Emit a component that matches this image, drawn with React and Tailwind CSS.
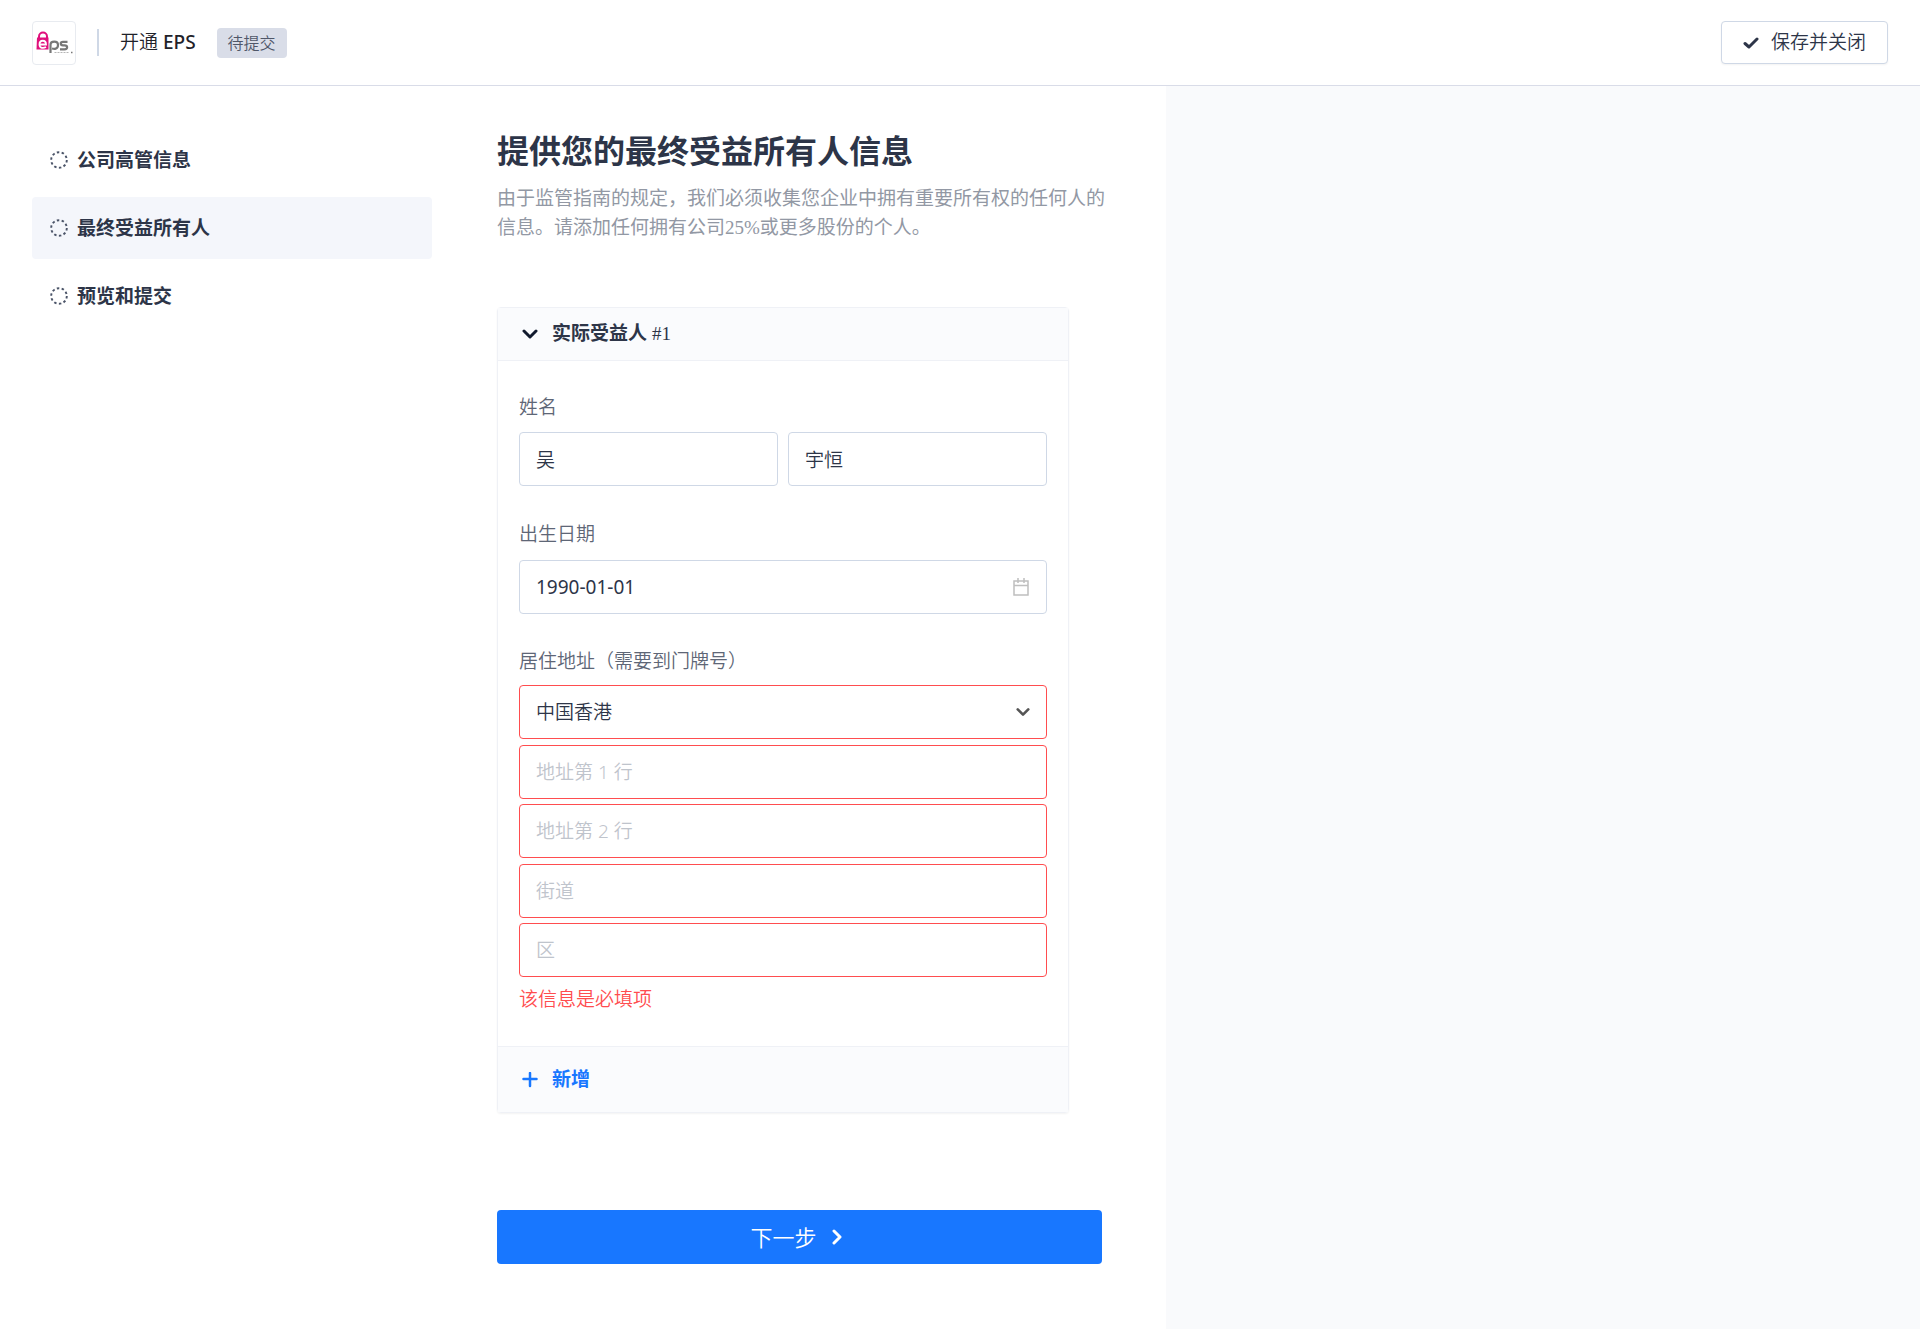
import React, { useState } from "react";

const steps = [
  { id: "officers", label: "公司高管信息" },
  { id: "ubo", label: "最终受益所有人" },
  { id: "review", label: "预览和提交" },
];

const inputClass =
  "block w-full h-[54px] px-4 rounded-[4px] border bg-white text-[19px] text-[#2d3548] placeholder:text-[#bfc4cc] focus:outline-none";

const labelClass = "block text-[19px] leading-[29px] font-[350] text-[#5e6676]";

const EpsLogo = () => (
  <svg viewBox="0 0 42 42" className="w-full h-full" role="img" aria-label="eps">
    <path d="M6 16v-1.500a4 4 0 0 1 8 0V16" fill="none" stroke="#e0107c" strokeWidth="2" />
    <path d="M4 15.500h11.500v12H3.500z" fill="#e0107c" />
    <path d="M6.500 22.500h6.500c0-5-6.500-5-6.500 0 0 4 4 4 6.500 2.500" fill="none" stroke="#fff" strokeWidth="1.800" />
    <path d="M17.500 31v-8c0-4.500 7.500-4.500 7.500 0s-4 4-6 3.500" fill="none" stroke="#777" strokeWidth="2.200" />
    <path d="M34.500 19.800h-4.500c-3 0-3 3.500 0 3.500h1.500c3.500 0 3.500 4 0 4h-4.500" fill="none" stroke="#777" strokeWidth="2.200" />
    <path d="M21.500 30.500h14" stroke="#b5b5b5" strokeWidth="1" strokeDasharray="2 1" />
    <path d="M38 30.500h1.500" stroke="#777" strokeWidth="1.500" />
  </svg>
);

const StepIcon = () => (
  <svg viewBox="0 0 18 18" className="size-[18px] shrink-0" aria-hidden="true">
    <circle cx="9" cy="9" r="7.800" fill="none" stroke="#4b5468" strokeWidth="1.900" strokeDasharray="2.500 2.400" />
  </svg>
);

const Chevron = ({ className }) => (
  <svg viewBox="0 0 16 16" className={className} fill="none" stroke="currentColor" strokeWidth="3" strokeLinecap="round" strokeLinejoin="round" aria-hidden="true">
    <path d="M2 5 8 11 14 5" />
  </svg>
);

const CalendarIcon = () => (
  <svg viewBox="0 0 18 18" className="size-[18px]" fill="none" stroke="#bfbfbf" strokeWidth="1.500" aria-hidden="true">
    <path d="M2 3h14v14H2zM2 7.500h14M6 0v5M12 0v5" />
  </svg>
);

const Header = () => (
  <header className="flex items-center justify-between h-[86px] px-8 bg-white border-b border-[#d9dce8]">
    <div className="flex items-center">
      <div className="size-11 rounded-[4px] border border-[#e8ebf0]">
        <EpsLogo />
      </div>
      <div className="w-[2px] h-[27px] mx-[21px] bg-[#cfd8e6]" />
      <h1 className="text-[19px] font-[350] text-[#1f2229]">
        开通 <span className="font-medium">EPS</span>
      </h1>
      <span className="flex items-center h-[30px] ml-[21px] px-[11px] rounded-[4px] bg-[#d9dde8] text-base font-[350] text-[#4f5668]">待提交</span>
    </div>
    <button type="button" className="flex items-center h-[43px] px-[21px] gap-3 rounded-[4px] border border-[#cfd8e6] bg-white shadow-xs text-[19px] font-[350] text-[#2d3548]">
      <svg viewBox="0 0 16 12" className="w-4 h-3" fill="none" stroke="currentColor" strokeWidth="3" strokeLinecap="round" strokeLinejoin="round" aria-hidden="true">
        <path d="M2 6.500 6 10 14 2" />
      </svg>
      保存并关闭
    </button>
  </header>
);

const Sidebar = ({ current, onSelect }) => (
  <nav className="flex flex-col gap-[6px] w-[400px] shrink-0 pt-[43px]">
    {steps.map((step) => (
      <button
        key={step.id}
        type="button"
        onClick={() => onSelect(step.id)}
        className={`flex items-center gap-[9px] h-[62px] px-[18px] rounded-[4px] text-[19px] font-bold text-[#2d3548] ${step.id === current ? "bg-[#f4f6fb]" : ""}`}
      >
        <StepIcon />
        {step.label}
      </button>
    ))}
  </nav>
);

const OwnerCard = () => {
  const [surname, setSurname] = useState("吴");
  const [givenName, setGivenName] = useState("宇恒");
  const [birthDate, setBirthDate] = useState("1990-01-01");
  const [region, setRegion] = useState("HK");

  return (
    <section className="mt-[65px] mr-[33px] rounded-[4px] border border-[#eff1f6] shadow-xs">
      <h3 className="flex items-center gap-[14px] h-[53px] px-6 border-b border-[#eff1f6] bg-[#fafbfd] text-[19px] font-bold text-[#2d3548]">
        <Chevron className="size-4 text-[#111a2e]" />
        <span>
          实际受益人 <span className="font-['Liberation_Serif','Noto_Sans_CJK_SC',serif] font-normal">#1</span>
        </span>
      </h3>

      <div className="px-[21px] pt-8 pb-8 bg-white">
        <label htmlFor="surname" className={labelClass}>姓名</label>
        <div className="grid grid-cols-2 gap-[10px] mt-[10px]">
          <input id="surname" value={surname} onChange={(e) => setSurname(e.target.value)} className={`${inputClass} font-[350] border-[#cfd8e6]`} />
          <input aria-label="名" value={givenName} onChange={(e) => setGivenName(e.target.value)} className={`${inputClass} font-[350] border-[#cfd8e6]`} />
        </div>

        <label htmlFor="birth" className={`${labelClass} mt-[34px]`}>出生日期</label>
        <div className="relative mt-[11px]">
          <input id="birth" value={birthDate} onChange={(e) => setBirthDate(e.target.value)} className={`${inputClass} border-[#cfd8e6]`} />
          <span className="absolute inset-y-0 right-[17px] flex items-center pointer-events-none">
            <CalendarIcon />
          </span>
        </div>

        <label htmlFor="region" className={`${labelClass} mt-[33px]`}>居住地址（需要到门牌号）</label>
        <div className="flex flex-col gap-[6px] mt-[9px]">
          <div className="relative">
            <select id="region" value={region} onChange={(e) => setRegion(e.target.value)} className={`${inputClass} font-[350] appearance-none border-[#ff4d4f]`}>
              <option value="HK">中国香港</option>
            </select>
            <span className="absolute inset-y-0 right-[17px] flex items-center pointer-events-none">
              <Chevron className="size-[14px] text-[#555]" />
            </span>
          </div>
          <div className="flex flex-col gap-[5px]">
            <input aria-label="地址第 1 行" placeholder="地址第 1 行" className={`${inputClass} font-[350] border-[#ff4d4f]`} />
            <input aria-label="地址第 2 行" placeholder="地址第 2 行" className={`${inputClass} font-[350] border-[#ff4d4f]`} />
          </div>
          <div className="flex flex-col gap-[5px]">
            <input aria-label="街道" placeholder="街道" className={`${inputClass} font-[350] border-[#ff4d4f]`} />
            <input aria-label="区" placeholder="区" className={`${inputClass} font-[350] border-[#ff4d4f]`} />
          </div>
        </div>
        <p className="mt-2 text-[19px] leading-[29px] font-[350] text-[#ff4d4f]">该信息是必填项</p>
      </div>

      <div className="flex items-center h-[66px] px-6 border-t border-[#eff1f6] bg-[#fafbfd]">
        <button type="button" className="flex items-center gap-[14px] text-[19px] font-bold text-[#1877ff]">
          <svg viewBox="0 0 16 16" className="size-4" stroke="currentColor" strokeWidth="2.500" strokeLinecap="round" aria-hidden="true">
            <path d="M8 1v13M1.500 7h13" />
          </svg>
          新增
        </button>
      </div>
    </section>
  );
};

const App = () => {
  const [current, setCurrent] = useState("ubo");

  return (
    <div className="flex flex-col min-h-screen bg-[#f9fafc] font-['Noto_Sans','Noto_Sans_CJK_SC',sans-serif]">
      <Header />
      <div className="flex flex-1 gap-[65px] w-[1166px] pl-8 bg-white">
        <Sidebar current={current} onSelect={setCurrent} />
        <main className="flex-1 pt-[41px] pr-[64px] pb-12">
          <h2 className="text-[32px] leading-[48px] font-bold text-[#2d3548]">提供您的最终受益所有人信息</h2>
          <p className="-mr-2 mt-[9px] text-[19px] leading-[29px] text-[#9298a4] font-['Liberation_Serif','Noto_Sans_CJK_SC',serif]">
            由于监管指南的规定，我们必须收集您企业中拥有重要所有权的任何人的信息。请添加任何拥有公司25%或更多股份的个人。
          </p>
          <OwnerCard />
          <button type="button" className="flex items-center justify-center gap-3 w-full h-[54px] mt-[97px] rounded-[4px] bg-[#1877ff] pr-1 text-[22px] font-[350] text-white">
            下一步
            <Chevron className="size-4 -rotate-90" />
          </button>
        </main>
      </div>
    </div>
  );
};

export default App;
